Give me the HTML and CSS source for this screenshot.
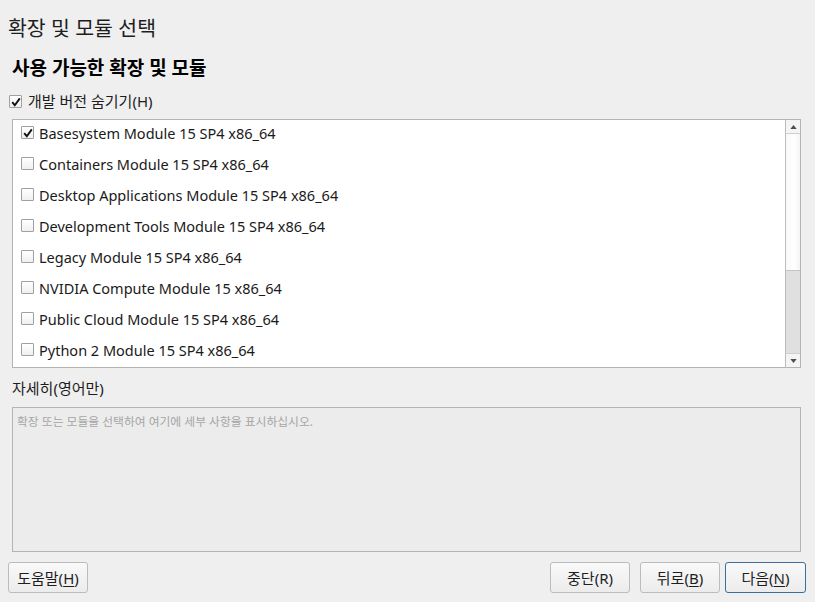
FILE: index.html
```html
<!DOCTYPE html>
<html lang="ko">
<head>
<meta charset="utf-8">
<link rel="stylesheet" href="styles.css">
</head>
<body>
<div class="page">
  <div class="title">확장 및 모듈 선택</div>
  <div class="heading">사용 가능한 확장 및 모듈</div>
  <label class="hide-dev">
    <span class="cb checked"><svg viewBox="0 0 12 12"><path d="M2.2 6.2 L4.8 9.2 L9.8 2.4" /></svg></span>
    <span>개발 버전 숨기기(H)</span>
  </label>
  <div class="listbox">
    <div class="items">
      <div class="item"><span class="cb checked"><svg viewBox="0 0 12 12"><path d="M2.2 6.2 L4.8 9.2 L9.8 2.4" /></svg></span><span>Basesystem Module 15 SP4 x86_64</span></div>
      <div class="item"><span class="cb"></span><span>Containers Module 15 SP4 x86_64</span></div>
      <div class="item"><span class="cb"></span><span>Desktop Applications Module 15 SP4 x86_64</span></div>
      <div class="item"><span class="cb"></span><span>Development Tools Module 15 SP4 x86_64</span></div>
      <div class="item"><span class="cb"></span><span>Legacy Module 15 SP4 x86_64</span></div>
      <div class="item"><span class="cb"></span><span>NVIDIA Compute Module 15 x86_64</span></div>
      <div class="item"><span class="cb"></span><span>Public Cloud Module 15 SP4 x86_64</span></div>
      <div class="item"><span class="cb"></span><span>Python 2 Module 15 SP4 x86_64</span></div>
    </div>
    <div class="scrollbar">
      <div class="arrow up"><svg viewBox="0 0 8 5"><path d="M0 5 L4 0 L8 5 Z"/></svg></div>
      <div class="track">
        <div class="thumb"></div>
      </div>
      <div class="arrow down"><svg viewBox="0 0 8 5"><path d="M0 0 L4 5 L8 0 Z"/></svg></div>
    </div>
  </div>
  <div class="details-label">자세히(영어만)</div>
  <div class="details">확장 또는 모듈을 선택하여 여기에 세부 사항을 표시하십시오.</div>
  <div class="buttons">
    <button class="btn">도움말(<u>H</u>)</button>
    <div class="spacer"></div>
    <button class="btn">중단(R)</button>
    <button class="btn">뒤로(<u>B</u>)</button>
    <button class="btn primary">다음(<u>N</u>)</button>
  </div>
</div>
</body>
</html>
```
FILE: styles.css
```css
html, body {
  margin: 0;
  padding: 0;
  background: #efefef;
}
body {
  font-family: "Noto Sans", "Noto Sans CJK KR", sans-serif;
  color: #1e1e1e;
  width: 815px;
  height: 602px;
  overflow: hidden;
}
.page {
  display: flex;
  flex-direction: column;
  height: 602px;
}
.title {
  font-size: 20.5px;
  line-height: 26px;
  padding: 15px 0 0 8px;
  height: 26px;
}
.heading {
  font-size: 19px;
  font-weight: bold;
  line-height: 26px;
  padding: 14px 0 0 12px;
  height: 26px;
  color: #000;
}
.hide-dev {
  display: flex;
  align-items: center;
  gap: 6px;
  font-size: 15px;
  line-height: 20px;
  margin: 10px 0 0 9px;
}
.cb {
  display: inline-block;
  width: 11px;
  height: 11px;
  border: 1px solid #a0a0a0;
  background: linear-gradient(#ffffff, #f0f0f0);
  border-radius: 1px;
  flex: none;
  position: relative;
}
.cb svg {
  position: absolute;
  left: 0;
  top: 0;
  width: 12px;
  height: 12px;
}
.cb svg path {
  fill: none;
  stroke: #111;
  stroke-width: 1.9;
}
.listbox {
  margin: 8px 14px 0 12px;
  height: 247px;
  border: 1px solid #b4b4b4;
  background: #fff;
  display: flex;
  overflow: hidden;
}
.items {
  flex: 1;
  padding: 0 0 0 8px;
  margin-top: -3px;
}
.item {
  display: flex;
  align-items: center;
  gap: 5px;
  height: 31px;
  font-size: 14.5px;
  color: #1a1a1a;
}
.scrollbar {
  width: 14px;
  border-left: 1px solid #bdbdbd;
  display: flex;
  flex-direction: column;
}
.arrow {
  height: 13px;
  background: #f4f4f4;
  display: flex;
  align-items: center;
  justify-content: center;
}
.arrow.up { border-bottom: 1px solid #cfcfcf; }
.arrow.down { border-top: 1px solid #cfcfcf; }
.arrow svg {
  width: 7px;
  height: 4px;
  fill: #505050;
}
.track {
  flex: 1;
  background: #e0e0e0;
  display: flex;
  flex-direction: column;
}
.thumb {
  height: 136px;
  background: linear-gradient(90deg, #f8f8f8, #ffffff 60%, #f4f4f4);
  border-bottom: 1px solid #c4c4c4;
}
.details-label {
  font-size: 15px;
  line-height: 20px;
  padding: 10px 0 0 12px;
  height: 20px;
}
.details {
  margin: 9px 14px 0 12px;
  height: 138px;
  border: 1px solid #b4b4b4;
  background: #ececec;
  font-size: 11.8px;
  line-height: 16px;
  color: #a6a6a6;
  padding: 5px 0 0 4px;
}
.buttons {
  display: flex;
  margin: 10px 9px 0 8px;
  gap: 10px;
}
.spacer { flex: 1; }
.btn {
  font-family: inherit;
  font-size: 15px;
  height: 31px;
  width: 80px;
  border: 1px solid #bcbcbc;
  border-radius: 3px;
  background: linear-gradient(#f9f9f9, #ececec);
  color: #1e1e1e;
  padding: 0;
}
.btn u { text-decoration-thickness: 1px; text-underline-offset: 2px; }
.btn.primary {
  width: 81px;
  border-color: #3c6e9c;
  margin-left: -5px;
}
```
